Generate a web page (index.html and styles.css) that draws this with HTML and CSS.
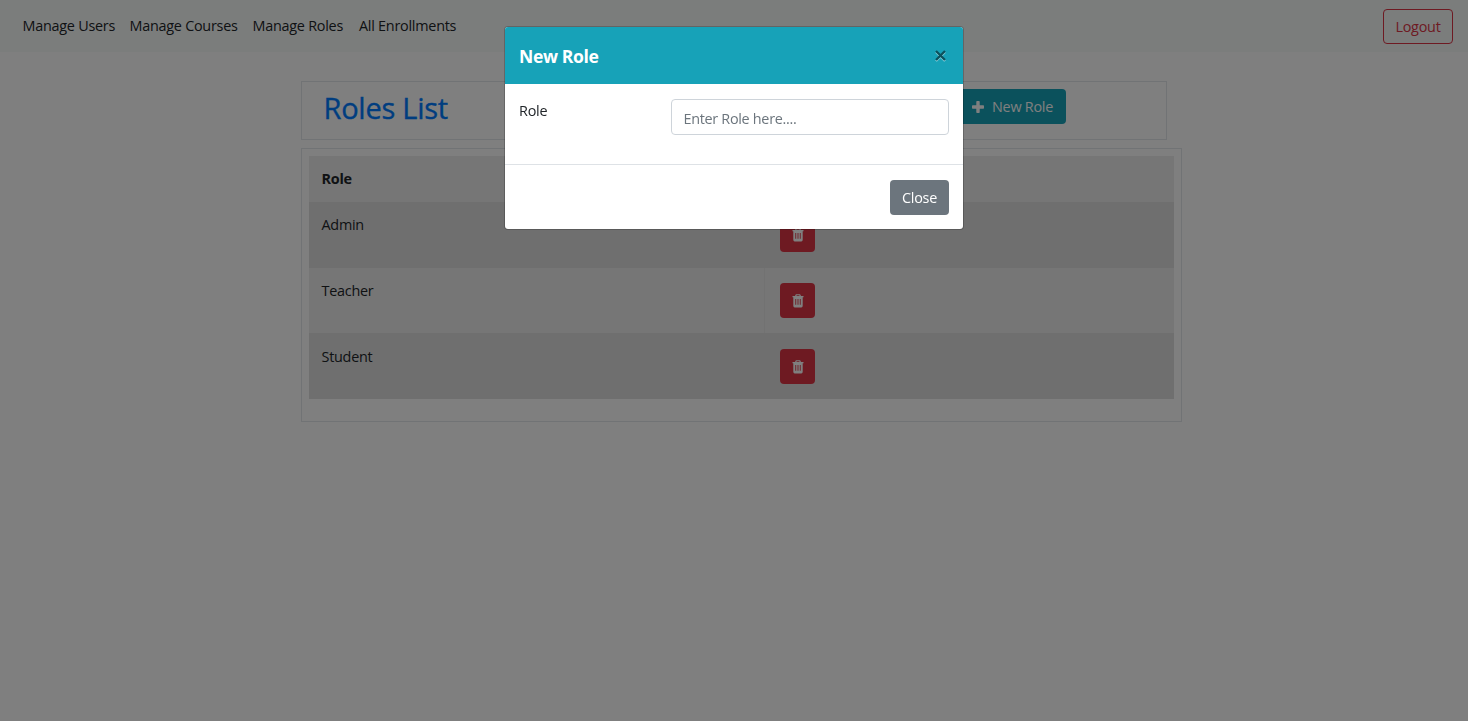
FILE: index.html
```html
<!DOCTYPE html>
<html lang="en">
<head>
<meta charset="utf-8">
<title>Roles List</title>
<link rel="stylesheet" href="styles.css">
</head>
<body>
<svg class="defs" aria-hidden="true">
  <symbol id="trash" viewBox="0 0 12 14">
    <path fill-rule="evenodd" d="M4.300.3h3.400q.7 0 .9.700l.3.900H11.500v1.400h-.8v8.500q0 1.600-1.400 1.600H2.700q-1.400 0-1.400-1.600V3.300H.5V1.900h2.600L3.400 1q.2-.7.900-.7zM4.700 1.300l-.3.600h3.200l-.3-.6zM3.300 5v5.800h.9V5zM5.550 5v5.800h.9V5zM7.800 5v5.800h.9V5z"/>
  </symbol>
</svg>
<div class="page">
  <nav class="navbar">
    <a class="nav-link users">Manage Users</a>
    <a class="nav-link courses">Manage Courses</a>
    <a class="nav-link roles">Manage Roles</a>
    <a class="nav-link enrollments">All Enrollments</a>
    <button class="btn btn-outline">Logout</button>
  </nav>
  <main class="content">
    <header class="title-card">
      <h1 class="title">Roles List</h1>
      <button class="btn btn-info"><svg class="plus" viewBox="0 0 12 12"><path d="M5 0h2q.7 0 .7.700V4.300h3.600q.7 0 .7.700v2q0 .7-.7.700H7.700v3.600q0 .7-.7.700H5q-.7 0-.7-.7V7.700H.7Q0 7.700 0 7V5q0-.7.700-.7h3.600V.7Q4.300 0 5 0z"/></svg><span>New Role</span></button>
    </header>
    <section class="table-card">
      <table class="table">
        <thead><tr><th>Role</th><th></th></tr></thead>
        <tbody>
          <tr><td>Admin</td><td class="action"><button class="btn btn-danger"><svg class="trash"><use href="#trash"/></svg></button></td></tr>
          <tr><td>Teacher</td><td class="action"><button class="btn btn-danger"><svg class="trash"><use href="#trash"/></svg></button></td></tr>
          <tr><td>Student</td><td class="action"><button class="btn btn-danger"><svg class="trash"><use href="#trash"/></svg></button></td></tr>
        </tbody>
      </table>
    </section>
  </main>
</div>
<div class="backdrop">
  <div class="modal" role="dialog">
    <div class="modal-header"><h2 class="modal-title">New Role</h2>
      <button class="close" aria-label="Close"><svg class="cross" viewBox="0 0 11 12"><path class="cross-shadow" d="M1 2l9 9M10 2l-9 9"/><path class="cross-line" d="M1 1l9 9M10 1l-9 9"/></svg></button>
    </div>
    <div class="modal-body"><label class="label" for="role">Role</label><input id="role" class="input" placeholder="Enter Role here...."></div>
    <div class="modal-footer"><button class="btn btn-secondary">Close</button></div>
  </div>
</div>
</body>
</html>
```
FILE: styles.css
```css
* { box-sizing: border-box; }
body {
  margin: 0;
  height: 721px;
  overflow: hidden;
  background: #fff;
  color: #212529;
  font: 14.4px/22px "Open Sans", "Noto Sans", sans-serif;
  letter-spacing: -0.25px;
}
.defs { display: none; }
.navbar {
  display: flex;
  align-items: center;
  gap: 15px;
  height: 52px;
  padding: 0 15px 0 22.500px;
  background: #f7faf9;
}
.nav-link { white-space: nowrap; }
.users { width: 92px; }
.courses { width: 108px; }
.roles { width: 91.500px; }
.enrollments { width: 98px; }
.btn {
  display: inline-flex;
  align-items: center;
  justify-content: center;
  height: 35px;
  padding: 1px 0 0;
  border: 1px solid transparent;
  border-radius: 4px;
  color: #fff;
  font: inherit;
  letter-spacing: inherit;
}
.btn-outline {
  width: 70px;
  margin-left: auto;
  border-color: #dc3545;
  background: transparent;
  color: #dc3545;
}
.content { padding: 29px 0 0 301px; }
.title-card {
  display: flex;
  justify-content: space-between;
  width: 866px;
  height: 59px;
  padding: 8px 100px 0 21.500px;
  border: 1px solid #e2e6ea;
}
.title {
  margin: -1px 0 0;
  color: #007bff;
  font-size: 29px;
  font-weight: 500;
  line-height: 37px;
  letter-spacing: -0.25px;
  -webkit-text-stroke: 0.35px #007bff;
}
.btn-info {
  width: 112px;
  margin-top: -1px;
  padding-left: 5px;
  gap: 8px;
  background: #17a2b8;
}
.plus { width: 12px; height: 12px; margin-top: -1px; fill: #fff; }
.table-card {
  width: 881px;
  height: 274px;
  margin-top: 8px;
  padding: 7px;
  border: 1px solid #e2e6ea;
}
.table {
  width: 865px;
  table-layout: fixed;
  border-collapse: collapse;
  background: #ececec;
}
th, td { padding: 12px 12.500px; text-align: left; vertical-align: top; }
th { height: 46px; }
th:first-child { width: 455px; }
td { height: 65.670px; padding-top: 12.400px; }
tbody tr:nth-child(odd) { background: #dfdfdf; }
tbody tr:nth-child(even) .action { box-shadow: inset 1px 0 #e4e4e4; }
.action { padding: 15.300px 16px 15px; line-height: 0; }
.btn-danger { width: 35px; background: #dc3545; }
.trash { width: 12px; height: 14px; fill: #fff; }
.backdrop {
  position: fixed;
  inset: 0;
  padding-top: 26px;
  background: rgba(0, 0, 0, 0.5);
}
.modal {
  width: 460px;
  height: 204px;
  margin: 0 auto;
  overflow: hidden;
  border: 1px solid rgba(0, 0, 0, 0.2);
  border-radius: 4px;
  background: #fff;
  background-clip: padding-box;
}
.modal-header {
  display: flex;
  align-items: center;
  justify-content: space-between;
  height: 57px;
  padding: 0 17px 0 14px;
  background: #17a2b8;
}
.modal-title {
  margin: 0;
  padding-top: 1px;
  color: #fff;
  font-size: 17.600px;
  font-weight: 700;
  letter-spacing: -0.4px;
}
.close { display: flex; padding: 0; border: 0; background: none; }
.cross { width: 11px; height: 12px; fill: none; stroke-width: 2.300; }
.cross-shadow { stroke: #8bd1dc; }
.cross-line { stroke: #0c515c; }
.modal-body {
  display: flex;
  justify-content: space-between;
  height: 80px;
  padding: 15px 14px 0;
}
.label { margin-top: 1px; }
.input {
  width: 278px;
  height: 36px;
  padding: 2px 11.500px 0;
  border: 1px solid #ced4da;
  border-radius: 4px;
  font: inherit;
  letter-spacing: -0.3px;
}
.input::placeholder { color: #6c757d; opacity: 1; }
.modal-footer {
  display: flex;
  justify-content: flex-end;
  padding: 15px 14px;
  border-top: 1px solid #dee2e6;
}
.btn-secondary { width: 59px; padding-top: 0; background: #6c757d; }
```
